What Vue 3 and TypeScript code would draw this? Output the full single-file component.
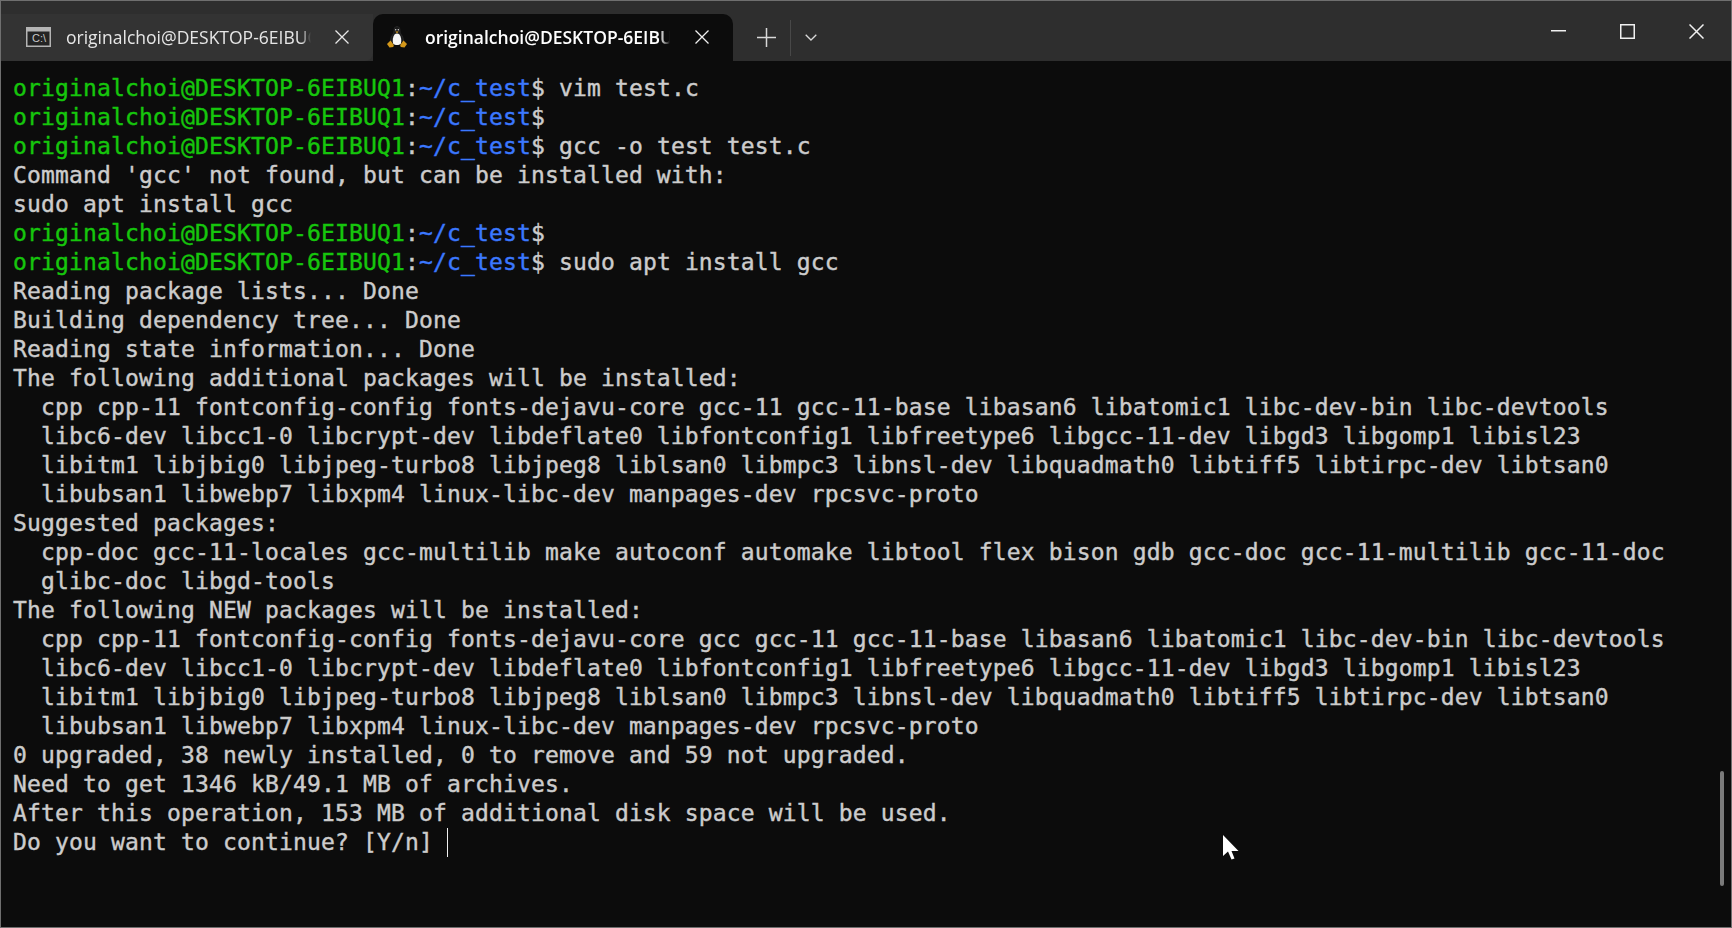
<script setup lang="ts">
type Seg = { t: string; c?: string };
const P = (cmd: string): Seg[] => [
  { t: 'originalchoi@DESKTOP-6EIBUQ1', c: 'g' },
  { t: ':' },
  { t: '~/c_test', c: 'b' },
  { t: '$' + cmd },
];
const T = (t: string): Seg[] => [{ t }];
const rows: Seg[][] = [
  P(' vim test.c'),
  P(''),
  P(' gcc -o test test.c'),
  T("Command 'gcc' not found, but can be installed with:"),
  T('sudo apt install gcc'),
  P(''),
  P(' sudo apt install gcc'),
  T('Reading package lists... Done'),
  T('Building dependency tree... Done'),
  T('Reading state information... Done'),
  T('The following additional packages will be installed:'),
  T('  cpp cpp-11 fontconfig-config fonts-dejavu-core gcc-11 gcc-11-base libasan6 libatomic1 libc-dev-bin libc-devtools'),
  T('  libc6-dev libcc1-0 libcrypt-dev libdeflate0 libfontconfig1 libfreetype6 libgcc-11-dev libgd3 libgomp1 libisl23'),
  T('  libitm1 libjbig0 libjpeg-turbo8 libjpeg8 liblsan0 libmpc3 libnsl-dev libquadmath0 libtiff5 libtirpc-dev libtsan0'),
  T('  libubsan1 libwebp7 libxpm4 linux-libc-dev manpages-dev rpcsvc-proto'),
  T('Suggested packages:'),
  T('  cpp-doc gcc-11-locales gcc-multilib make autoconf automake libtool flex bison gdb gcc-doc gcc-11-multilib gcc-11-doc'),
  T('  glibc-doc libgd-tools'),
  T('The following NEW packages will be installed:'),
  T('  cpp cpp-11 fontconfig-config fonts-dejavu-core gcc gcc-11 gcc-11-base libasan6 libatomic1 libc-dev-bin libc-devtools'),
  T('  libc6-dev libcc1-0 libcrypt-dev libdeflate0 libfontconfig1 libfreetype6 libgcc-11-dev libgd3 libgomp1 libisl23'),
  T('  libitm1 libjbig0 libjpeg-turbo8 libjpeg8 liblsan0 libmpc3 libnsl-dev libquadmath0 libtiff5 libtirpc-dev libtsan0'),
  T('  libubsan1 libwebp7 libxpm4 linux-libc-dev manpages-dev rpcsvc-proto'),
  T('0 upgraded, 38 newly installed, 0 to remove and 59 not upgraded.'),
  T('Need to get 1346 kB/49.1 MB of archives.'),
  T('After this operation, 153 MB of additional disk space will be used.'),
  T('Do you want to continue? [Y/n] '),
];
</script>

<template>
  <div class="win">
    <header class="bar">
      <div class="tab">
        <svg class="ico" width="25" height="20" viewBox="0 0 25 20">
          <rect x="0.75" y="0.75" width="23.5" height="18.5" fill="#242424" stroke="#b4b4b4" stroke-width="1.5" />
          <rect x="1" y="1" width="23" height="3.5" fill="#b4b4b4" />
        </svg>
        <span class="cdrive">C:\</span>
        <span class="title">originalchoi@DESKTOP-6EIBUQ1</span>
        <svg class="x" width="14" height="14" viewBox="0 0 14 14"><path d="M0.5 0.5 13.5 13.5M13.5 0.5 0.5 13.5" stroke="#e8e8e8" stroke-width="1.3" /></svg>
      </div>
      <div class="tab active">
        <svg class="ico" width="20" height="22" viewBox="0 0 20 22">
          <path d="M10 0.500C7.500 0.500 7 2.500 7 5 7 7 6 8 4.800 10 3.500 12.500 3 15 4 18H16C17 15 16.500 12.500 15.200 10 14 8 13 7 13 5 13 2.500 12.500 0.500 10 0.500Z" fill="#1a1a1a" stroke="#3a3a3a" stroke-width=".5" />
          <path d="M7.500 8.500C5.800 11 5.200 14.500 6.200 17.800 8 19.500 12 19.500 13.800 17.800 14.800 14.500 14.200 11 12.500 8.500 11 7.300 9 7.300 7.500 8.500Z" fill="#f6f6f6" />
          <path d="M8.300 5.500H11.700L10 7.300Z" fill="#d9a020" />
          <circle cx="8.700" cy="3.800" r=".7" fill="#ddd" /><circle cx="11.300" cy="3.800" r=".7" fill="#ddd" />
          <path d="M0 18 3.500 14.500 6.800 19 6.300 21 2.500 21.500Z" fill="#d4981a" />
          <path d="M20 18 16.500 14.500 13.200 19 13.700 21 17.500 21.500Z" fill="#d4981a" />
        </svg>
        <span class="title">originalchoi@DESKTOP-6EIBUQ1</span>
        <svg class="x" width="14" height="14" viewBox="0 0 14 14"><path d="M0.500 0.500 13.500 13.500M13.500 0.500 0.500 13.500" stroke="#f0f0f0" stroke-width="1.3" /></svg>
      </div>
      <div class="split">
        <svg class="plus" width="19" height="19" viewBox="0 0 19 19"><path d="M9.500 0V19M0 9.500H19" stroke="#d8d8d8" stroke-width="1.500" /></svg>
        <i class="sep"></i>
        <svg class="chev" width="12" height="7" viewBox="0 0 12 7"><path d="M.7.700 6 6 11.300.700" fill="none" stroke="#d8d8d8" stroke-width="1.300" /></svg>
      </div>
      <div class="caption">
        <svg width="15" height="2" viewBox="0 0 15 2"><rect width="15" height="1.500" fill="#f0f0f0" /></svg>
        <svg width="15" height="15" viewBox="0 0 15 15"><rect x=".75" y=".75" width="13.500" height="13.500" fill="none" stroke="#f0f0f0" stroke-width="1.500" /></svg>
        <svg width="15" height="15" viewBox="0 0 15 15"><path d="M.5.500 14.500 14.500M14.500.500.500 14.500" stroke="#f0f0f0" stroke-width="1.500" /></svg>
      </div>
    </header>
    <main class="term">
      <div v-for="(r, i) in rows" :key="i" class="row"><span v-for="(s, j) in r" :key="j" :class="s.c">{{ s.t }}</span><i v-if="i === rows.length - 1" class="cursor"></i></div>
      <i class="thumb"></i>
      <svg class="mouse" width="16" height="25" viewBox="0 0 16 25"><path d="M0 0V21L5 16.500 8.500 24.500 11.500 23.500 8.500 16H15.500Z" fill="#fff" /></svg>
    </main>
  </div>
</template>

<style>
html, body { margin: 0; background: #0c0c0c; overflow: hidden; }
</style>

<style scoped>
.win { width: 1732px; height: 928px; box-sizing: border-box; border: 1px solid #6f6f6f; display: flex; flex-direction: column; background: #0c0c0c; overflow: hidden; }
.bar { height: 60px; flex: none; background: #2e2e2e; display: flex; align-items: flex-end; box-sizing: border-box; }
.tab { width: 372px; height: 47px; box-sizing: border-box; padding: 0 0 2px 25px; display: flex; align-items: center; background: #333; color: #e6e6e6; border-radius: 0 0 8px 0; position: relative; font: 400 17.500px "Open Sans", sans-serif; }
.tab.active { width: 360px; background: #0c0c0c; color: #fff; font-weight: 600; padding-left: 14px; border-radius: 10px 10px 0 0; }
.ico { flex: none; }
.cdrive { position: absolute; left: 31px; top: 18px; font: 400 11px "Liberation Sans", sans-serif; color: #c8c8c8; }
.title { flex: none; width: 245px; margin-left: 15px; overflow: hidden; white-space: nowrap; -webkit-mask-image: linear-gradient(to right, #000 96%, transparent); mask-image: linear-gradient(to right, #000 96%, transparent); }
.active .title { margin-left: 18px; }
.x { flex: none; margin-left: 24px; }
.active .x { margin-left: 25px; }
.split { display: flex; align-items: center; height: 47px; padding-left: 24px; }
.sep { width: 1px; height: 36px; margin: 0 14px 0 14px; background: #484848; }
.caption { margin-left: auto; height: 60px; display: flex; align-items: center; gap: 54px; padding-right: 27px; }
.term { flex: 1; position: relative; padding: 13px 0 0 12px; font: 400 23px/29px "DejaVu Sans Mono", monospace; letter-spacing: 0.150px; color: #cccccc; -webkit-text-stroke: 0.400px currentColor; }
.row { height: 29px; white-space: pre; }
.g { color: #16c60c; }
.b { color: #3b78ff; }
.cursor { display: inline-block; width: 1px; height: 29px; background: #f0f0f0; vertical-align: top; }
.thumb { position: absolute; right: 7px; top: 710px; width: 4px; height: 115px; border-radius: 2px; background: #7a7a7a; }
.mouse { position: absolute; left: 1222px; top: 774px; }
</style>
